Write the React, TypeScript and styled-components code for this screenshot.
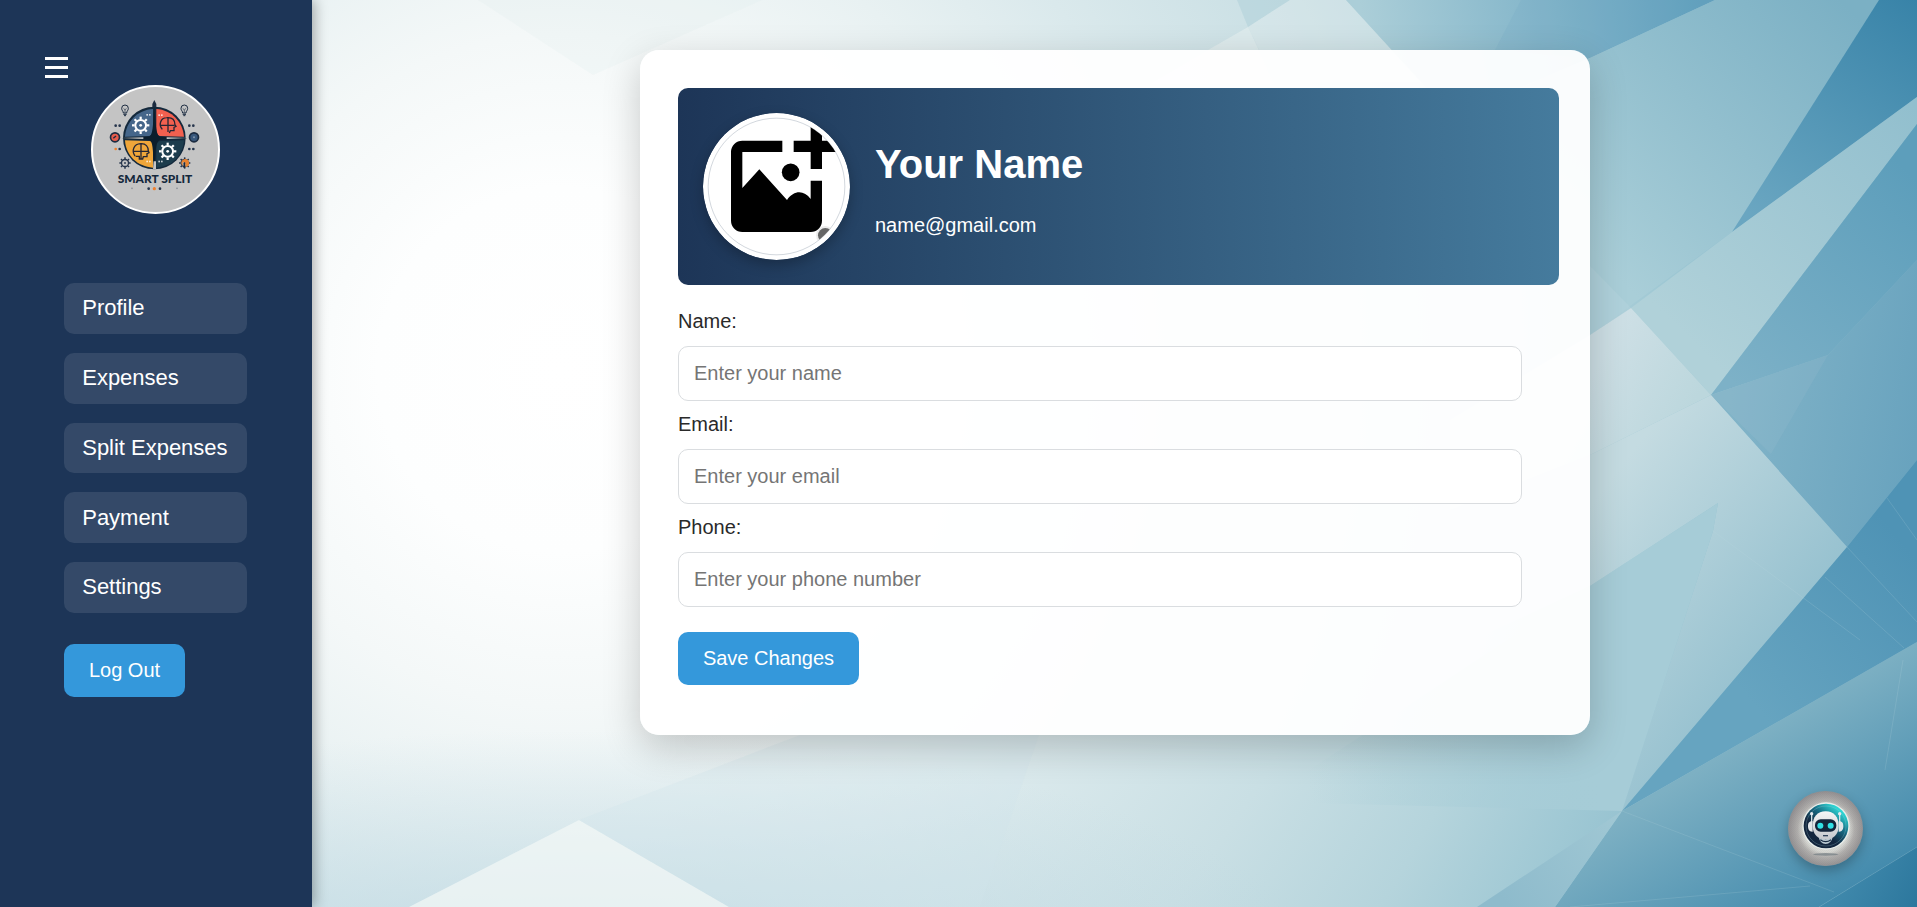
import React from "react";
import styled, { createGlobalStyle } from "styled-components";

const GlobalStyle = createGlobalStyle`
  *, *::before, *::after { box-sizing: border-box; }
  html, body { margin: 0; padding: 0; height: 100%; overflow: hidden; }
  body, input, button { font-family: "Liberation Sans", Arial, sans-serif; }
`;

const Page = styled.div`
  position: relative;
  display: flex;
  width: 100%;
  height: 100vh;
  overflow: hidden;
  isolation: isolate;
`;

const Backdrop = styled.svg`
  position: absolute;
  inset: 0;
  width: 100%;
  height: 100%;
  z-index: -1;
`;

const Sidebar = styled.aside`
  flex: none;
  width: 312px;
  height: 100%;
  padding: 57px 64px 0;
  background: #1d3557;
  box-shadow: 3px 0 12px rgba(0, 0, 0, 0.3);
  display: flex;
  flex-direction: column;
`;

const MenuButton = styled.button`
  align-self: flex-start;
  display: flex;
  flex-direction: column;
  gap: 6px;
  width: 23px;
  height: 21px;
  margin: 0 0 7px -19px;
  padding: 0;
  border: 0;
  background: none;
`;

const MenuLine = styled.span`
  height: 3px;
  background: #fff;
`;

const Logo = styled.svg`
  display: block;
  flex: none;
  width: 129px;
  height: 129px;
  margin-left: 27px;
`;

const Nav = styled.nav`
  display: flex;
  flex-direction: column;
  gap: 19px;
  margin-top: 69px;
`;

const NavItem = styled.a`
  display: flex;
  align-items: center;
  width: 183px;
  height: 50.75px;
  padding: 0 0 0 18.25px;
  border-radius: 10px;
  background: rgba(255, 255, 255, 0.1);
  color: #fff;
  font-size: 22px;
  letter-spacing: -0.02px;
  white-space: nowrap;
  text-decoration: none;
`;

const ActionButton = styled.button<{ $width: number; $gap: number; $drop?: number }>`
  flex: none;
  display: block;
  width: ${(p) => p.$width}px;
  height: 53px;
  margin: ${(p) => p.$gap}px 0 0;
  padding: ${(p) => p.$drop ?? 0}px 0 1px;
  border: 0;
  border-radius: 10px;
  background: #3498db;
  color: #fff;
  font-size: 20px;
  white-space: nowrap;
`;

const Main = styled.main`
  flex: 1;
  display: flex;
  align-items: flex-start;
  padding: 50px 0 0 328px;
`;

const Card = styled.section`
  width: 950px;
  height: 685px;
  padding: 38px 31px 50px 38px;
  border-radius: 19px;
  background: rgba(255, 255, 255, 0.95);
  box-shadow: 0 12px 38px rgba(0, 0, 0, 0.2);
`;

const ProfileHeader = styled.header`
  display: flex;
  gap: 25px;
  height: 197px;
  padding: 25px;
  border-radius: 10px;
  background: linear-gradient(to right, #1d3557, #457b9d);
  color: #fff;
`;

const Avatar = styled.svg`
  flex: none;
  width: 147px;
  height: 147px;
  border-radius: 50%;
  box-shadow: 0 5px 13px rgba(0, 0, 0, 0.25);
`;

const Identity = styled.div`
  padding-top: 28px;
`;

const DisplayName = styled.h2`
  margin: 0;
  font-size: 40px;
  line-height: 46px;
`;

const Address = styled.p`
  margin: 27px 0 0;
  font-size: 20px;
  line-height: 23px;
`;

const Form = styled.form`
  display: flex;
  flex-direction: column;
  align-items: flex-start;
  gap: 12px;
  padding-top: 25px;
`;

const Field = styled.label`
  display: flex;
  flex-direction: column;
  gap: 13px;
  color: #2a2a2a;
  font-size: 20px;
  line-height: 23px;
`;

const Input = styled.input`
  width: 844px;
  height: 55px;
  padding: 0 15px;
  border: 1px solid #dadde0;
  border-radius: 10px;
  background: #fff;
  font-size: 20px;
  outline: none;
  &::placeholder { color: #757575; opacity: 1; }
`;

const ChatButton = styled.button`
  position: absolute;
  right: 54px;
  bottom: 41px;
  width: 75px;
  height: 75px;
  padding: 0;
  border: 0;
  border-radius: 50%;
  background: none;
  box-shadow: 0 5px 12px rgba(0, 0, 0, 0.25);
`;

const ChatArt = styled.svg`
  display: block;
  width: 75px;
  height: 75px;
`;

type Facet = { id: string; pts: string; line: [number, number, number, number]; from: string; to: string };

const facets: Facet[] = [
  { id: "a", pts: "1346,0 1715,0 1590,58 1420,130 1421,82", line: [1370, 60, 1700, 0], from: "#abced8", to: "#62a1be" },
  { id: "b", pts: "1400,140 1590,58 1715,0 1879,0 1732,232 1590,335 1590,266 1421,82", line: [1590, 250, 1840, 0], from: "#a9ced8", to: "#7bb0c4" },
  { id: "c", pts: "1879,0 1917,0 1917,97 1732,232", line: [1760, 220, 1917, 0], from: "#6aa6c1", to: "#3883a8" },
  { id: "d", pts: "1631,308 1732,232 1917,97 1917,124 1711,395", line: [1690, 340, 1917, 110], from: "#b0d1d9", to: "#92bfce" },
  { id: "e", pts: "1917,124 1917,260 1828,355 1711,395", line: [1730, 380, 1917, 180], from: "#7db1c7", to: "#5d9ebb" },
  { id: "f", pts: "1711,395 1828,355 1917,260 1917,460 1847,547", line: [1730, 400, 1917, 430], from: "#82b4c8", to: "#69a3be" },
  { id: "g", pts: "1450,420 1590,335 1631,308 1711,395 1590,455 1450,510", line: [1600, 360, 1690, 410], from: "#cddfe5", to: "#bcd7dd" },
  { id: "h", pts: "1450,510 1590,455 1711,395 1847,547 1622,811 1713,531 1718,503 1590,586 1450,650", line: [1610, 480, 1790, 620], from: "#c4dbe1", to: "#98c2d0" },
  { id: "i", pts: "1306,772 1590,586 1718,503 1713,531 1622,811 1306,803", line: [1310, 790, 1590, 740], from: "rgba(172,208,217,0)", to: "#a6ccd7" },
  { id: "j", pts: "1847,547 1917,460 1917,642 1622,811", line: [1750, 700, 1917, 560], from: "#66a4c0", to: "#4f93b5" },
  { id: "k", pts: "1622,811 1917,642 1917,847 1819,907 1555,907", line: [1750, 738, 1850, 900], from: "#7db0c3", to: "#4189ac" },
  { id: "l", pts: "1917,847 1917,907 1819,907", line: [1850, 870, 1917, 907], from: "#3f88ab", to: "#2c779d" },
  { id: "m", pts: "1622,811 1555,907 1477,907", line: [1622, 811, 1510, 907], from: "#a1c8d4", to: "#8ebbcc" },
];

function Background() {
  return (
    <Backdrop viewBox="0 0 1917 907" preserveAspectRatio="none" aria-hidden="true">
      <defs>
        <radialGradient id="glow" gradientUnits="userSpaceOnUse" cx="560" cy="370" r="1400">
          <stop offset="0" stopColor="#ffffff" />
          <stop offset="0.13" stopColor="#fdfefe" />
          <stop offset="0.24" stopColor="#f4f8f8" />
          <stop offset="0.34" stopColor="#e8f1f2" />
          <stop offset="0.44" stopColor="#dae9ec" />
          <stop offset="0.58" stopColor="#c9dfe4" />
          <stop offset="0.7" stopColor="#b5d4dc" />
          <stop offset="0.79" stopColor="#9fc8d4" />
          <stop offset="1" stopColor="#72a9c1" />
        </radialGradient>
        <radialGradient id="floor" gradientUnits="userSpaceOnUse" cx="0" cy="0" r="1" gradientTransform="translate(560 1010) scale(800 280)">
          <stop offset="0.2" stopColor="#bdd8e2" stopOpacity="0.8" />
          <stop offset="1" stopColor="#bdd8e2" stopOpacity="0" />
        </radialGradient>
        {facets.map((f) => (
          <linearGradient key={f.id} id={`facet-${f.id}`} gradientUnits="userSpaceOnUse" x1={f.line[0]} y1={f.line[1]} x2={f.line[2]} y2={f.line[3]}>
            <stop offset="0" stopColor={f.from} />
            <stop offset="1" stopColor={f.to} />
          </linearGradient>
        ))}
      </defs>
      <rect width="1917" height="907" fill="url(#glow)" />
      <rect y="720" width="1400" height="187" fill="url(#floor)" />
      <path d="M478 0 593 75 762 0Z" fill="#dceaed" opacity="0.2" />
      <path d="M1237 0H1290L1248 27Z" fill="#b3d2da" opacity="0.6" />
      <path d="M1248 27 1208 50 1150 84H1275Z" fill="#f3f8f5" opacity="0.4" />
      <path d="M1248 27 1290 0H1346L1421 82H1275Z" fill="#eaf3f3" opacity="0.3" />
      <path d="M409 907 579 820 729 907Z" fill="#f2f7f5" opacity="0.75" />
      <path d="M579 820 729 907H980L1039 735H800Z" fill="#cfe4ea" opacity="0.3" />
      {facets.map((f) => (
        <polygon key={f.id} points={f.pts} fill={`url(#facet-${f.id})`} />
      ))}
      <path d="M1590 266 1631 308 1590 335Z" fill="#c4dde3" opacity="0.25" />
      <path d="M1828 355 1771 454 1711 395Z" fill="#a9c8d2" opacity="0.14" />
      <path d="M1521 0 1495 50 1590 58 1715 0Z" fill="#5f9fbd" opacity="0.12" />
      <g fill="none" stroke="#c0dce3" strokeWidth="1" opacity="0.17">
        <path d="M1713 531 1860 640M1847 547 1917 622M1825 577 1904 648M1887 498 1917 540" />
        <path d="M1622 811 1834 892M1570 907 1810 886M1903 660 1885 770M1819 907 1917 847" />
      </g>
    </Backdrop>
  );
}

function Gear({ x, y, r, color, width }: { x: number; y: number; r: number; color: string; width: number }) {
  return (
    <g transform={`translate(${x} ${y})`} fill="none" stroke={color} strokeWidth={width}>
      <circle r={r * 0.62} />
      {[0, 45, 90, 135, 180, 225, 270, 315].map((a) => (
        <path key={a} d={`M0 ${-r * 0.7}V${-r}`} strokeWidth={width * 1.1} transform={`rotate(${a})`} />
      ))}
      <circle r={r * 0.16} fill={color} stroke="none" />
    </g>
  );
}

function Bulb({ x }: { x: number }) {
  return (
    <g transform={`translate(${x} 0)`} fill="none" stroke="#1b2b40" strokeWidth="3">
      <path d="M-5 249C-5 243-10 242-10 235A10 10 0 0 1 10 235C10 242 5 243 5 249Z" />
      <path d="M-4 235 0 241 4 235M0 241V248" strokeWidth="1.8" />
      <path d="M-5 253H5M-3 257H3" strokeWidth="3" />
    </g>
  );
}

function SmartSplitLogo() {
  return (
    <Logo viewBox="273 165 387 387" role="img" aria-label="Smart Split">
      <circle cx="466.500" cy="358.500" r="190.500" fill="#c4c4c4" stroke="#fff" strokeWidth="6" />
      <circle cx="463" cy="324" r="94" fill="#14293c" />
      <path d="M459 237C411 240 378 276 375 320L448 318C456 315 459 306 459 297Z" fill="#45668a" />
      <path d="M469 237C516 240 548 276 552 320L479 318C471 315 469 306 469 297Z" fill="#f2604f" />
      <path d="M375 331C378 378 413 410 459 413V349C459 339 455 333 445 333Z" fill="#efa63a" />
      <path d="M552 331C548 378 516 410 469 413V349C469 339 474 333 484 333Z" fill="#1c3c4d" />
      <path d="M364 325 445 320C458 318 458 300 463 230C468 300 470 318 482 320L564 325 482 329C470 332 468 342 465 394H461C458 342 457 332 445 329Z" fill="#0c1e2c" />
      <path d="M365 324 430 322V327ZM563 324 500 322V327ZM461 394H468V418H459Z" fill="#c4c4c4" />
      <path d="M463 210 469 222V231H457V222Z" fill="#1b2b40" />
      <Gear x={422} y={286} r={26} color="#fff" width={6} />
      <Gear x={503} y={364} r={26} color="#fff" width={6} />
      <g fill="none" stroke="#252634" strokeWidth="4">
        <path d="M487 298C475 285 481 264 500 263C518 261 525 271 525 285L528 289 522 292V302H511L508 309M480 286H523M504 263V306" />
        <path d="M405 378C394 363 401 342 422 341C438 340 445 350 445 363L447 368 441 371V380H430L428 387H418V379H407M400 364H444M423 342V386" />
      </g>
      <g fill="#fff" opacity="0.75">
        <rect x="439" y="252" width="5" height="5" /><rect x="447" y="252" width="5" height="5" />
        <rect x="475" y="253" width="5" height="5" /><rect x="483" y="253" width="5" height="5" />
        <rect x="439" y="392" width="5" height="5" /><rect x="447" y="392" width="5" height="5" />
        <rect x="475" y="392" width="5" height="5" /><rect x="483" y="392" width="5" height="5" />
      </g>
      <Bulb x={375} />
      <Bulb x={553} />
      <circle cx="345" cy="322" r="13.500" fill="#e65c4c" stroke="#1b2b40" strokeWidth="5" />
      <path d="M340 325 348 318" stroke="#1b2b40" strokeWidth="4" />
      <circle cx="582" cy="322" r="13.500" fill="#38577b" stroke="#1b2b40" strokeWidth="5" />
      <circle cx="582" cy="322" r="3" fill="#8195ad" />
      <Gear x={375} y={399} r={17} color="#25344b" width={4} />
      <Gear x={554} y={399} r={17} color="#25344b" width={4} />
      <path d="M554 387A12 12 0 0 0 548 408V397H556V411A12 12 0 0 0 554 387Z" fill="#e9822e" />
      <path d="M553 398V414" stroke="#1b2b40" strokeWidth="5" />
      <g fill="#25344b">
        <circle cx="347" cy="287" r="4" /><circle cx="359" cy="287" r="4" />
        <circle cx="568" cy="287" r="4" /><circle cx="580" cy="287" r="4" />
        <circle cx="347" cy="357" r="4" fill="#ef8130" /><circle cx="359" cy="357" r="4" />
        <circle cx="568" cy="357" r="4" /><circle cx="580" cy="357" r="4" />
        <circle cx="446" cy="476" r="4" /><circle cx="463" cy="476" r="5" fill="#ef8130" /><circle cx="480" cy="476" r="4" />
        <circle cx="396" cy="475" r="2.500" opacity="0.4" /><circle cx="531" cy="475" r="2.500" opacity="0.4" />
      </g>
      <text x="353" y="458" textLength="224" lengthAdjust="spacingAndGlyphs" fontFamily="Lato, sans-serif" fontWeight="900" fontSize="36" fill="#14283c">SMART SPLIT</text>
    </Logo>
  );
}

function AvatarPicture() {
  return (
    <Avatar viewBox="219 219 441 441" role="img" aria-label="Add photo">
      <defs>
        <clipPath id="avatar-clip"><circle cx="439.500" cy="439.500" r="205" /></clipPath>
      </defs>
      <circle cx="439.500" cy="439.500" r="220.500" fill="#fff" />
      <circle cx="439.500" cy="439.500" r="205" fill="none" stroke="#1d3557" strokeOpacity="0.3" strokeWidth="2" />
      <g clipPath="url(#avatar-clip)">
        <path d="M457 302H337A34 34 0 0 0 303 336V542A34 34 0 0 0 337 576H542A34 34 0 0 0 576 542V422H542V477C522 450 492 450 471 480L388 388 337 444V336H457Z" />
        <path d="M542 240H576V302H640V336H576V387H542V336H491V302H542Z" />
        <circle cx="482" cy="397" r="26.500" />
        <circle cx="586" cy="586" r="28" fill="#000" opacity="0.08" />
        <circle cx="586" cy="586" r="22" fill="#666" />
      </g>
    </Avatar>
  );
}

function Robot() {
  return (
    <ChatArt viewBox="84 64 225 225" aria-hidden="true">
      <defs>
        <radialGradient id="bot-base" gradientUnits="userSpaceOnUse" cx="198" cy="178" r="114">
          <stop offset="0.6" stopColor="#dcddd8" />
          <stop offset="0.75" stopColor="#b3b1af" />
          <stop offset="1" stopColor="#928f91" />
        </radialGradient>
        <linearGradient id="bot-ring" x1="0.2" y1="0.8" x2="0.75" y2="0.1">
          <stop offset="0.3" stopColor="#13263e" />
          <stop offset="0.65" stopColor="#176b83" />
          <stop offset="1" stopColor="#2cd6d4" />
        </linearGradient>
        <linearGradient id="bot-face" x1="0" y1="0" x2="0" y2="1">
          <stop offset="0" stopColor="#f5f6f6" />
          <stop offset="1" stopColor="#c5c8cd" />
        </linearGradient>
        <pattern id="bot-mesh" width="6" height="6" patternUnits="userSpaceOnUse">
          <path d="M0 0H3V3H0ZM3 3H6V6H3Z" fill="#6c686a" opacity="0.14" />
        </pattern>
      </defs>
      <circle cx="196.500" cy="176.500" r="112.500" fill="url(#bot-base)" />
      <circle cx="196.500" cy="176.500" r="112.500" fill="url(#bot-mesh)" />
      <circle cx="198" cy="169" r="71" fill="#e8eeeb" />
      <circle cx="198" cy="169" r="67" fill="url(#bot-ring)" />
      <circle cx="198" cy="169" r="60" fill="none" stroke="#a9d1d6" strokeWidth="1.500" opacity="0.5" />
      <path d="M155 134V158M239 134V158" stroke="#d5e3e7" strokeWidth="4" />
      <circle cx="155" cy="132" r="5" fill="#e3eaee" /><circle cx="239" cy="132" r="5" fill="#e3eaee" />
      <path d="M158 155C146 154 144 162 144 170C144 179 148 187 158 186ZM236 155C248 154 250 162 250 170C250 179 246 187 236 186Z" fill="#e2e6e9" />
      <path d="M176 203Q197 214 218 203Q214 222 197 223Q180 222 176 203Z" fill="#b9c9d1" />
      <path d="M181 210Q197 222 213 210" fill="none" stroke="#172b43" strokeWidth="4" />
      <path d="M197 125C222 125 236 142 236 168C236 195 219 209 197 209C175 209 158 195 158 168C158 142 172 125 197 125Z" fill="url(#bot-face)" />
      <rect x="165" y="149" width="64" height="37" rx="17" fill="#13253b" />
      <circle cx="181" cy="168" r="9" fill="#31dfe5" /><circle cx="212" cy="168" r="9" fill="#31dfe5" />
      <path d="M189 198H204" stroke="#30445b" strokeWidth="4" />
      <ellipse cx="197" cy="254" rx="38" ry="4" fill="#6c777c" opacity="0.65" />
    </ChatArt>
  );
}

const navItems = ["Profile", "Expenses", "Split Expenses", "Payment", "Settings"];

const fields = [
  { label: "Name:", type: "text", placeholder: "Enter your name" },
  { label: "Email:", type: "email", placeholder: "Enter your email" },
  { label: "Phone:", type: "tel", placeholder: "Enter your phone number" },
];

export default function App() {
  return (
    <>
      <GlobalStyle />
      <Page>
        <Background />
        <Sidebar>
          <MenuButton aria-label="Menu">
            <MenuLine />
            <MenuLine />
            <MenuLine />
          </MenuButton>
          <SmartSplitLogo />
          <Nav>
            {navItems.map((item) => (
              <NavItem key={item}>{item}</NavItem>
            ))}
          </Nav>
          <ActionButton $width={121} $gap={31} $drop={1}>Log Out</ActionButton>
        </Sidebar>
        <Main>
          <Card>
            <ProfileHeader>
              <AvatarPicture />
              <Identity>
                <DisplayName>Your Name</DisplayName>
                <Address>name@gmail.com</Address>
              </Identity>
            </ProfileHeader>
            <Form>
              {fields.map((f) => (
                <Field key={f.label}>
                  {f.label}
                  <Input type={f.type} placeholder={f.placeholder} />
                </Field>
              ))}
              <ActionButton type="button" $width={181} $gap={13}>Save Changes</ActionButton>
            </Form>
          </Card>
        </Main>
        <ChatButton aria-label="Chat">
          <Robot />
        </ChatButton>
      </Page>
    </>
  );
}
